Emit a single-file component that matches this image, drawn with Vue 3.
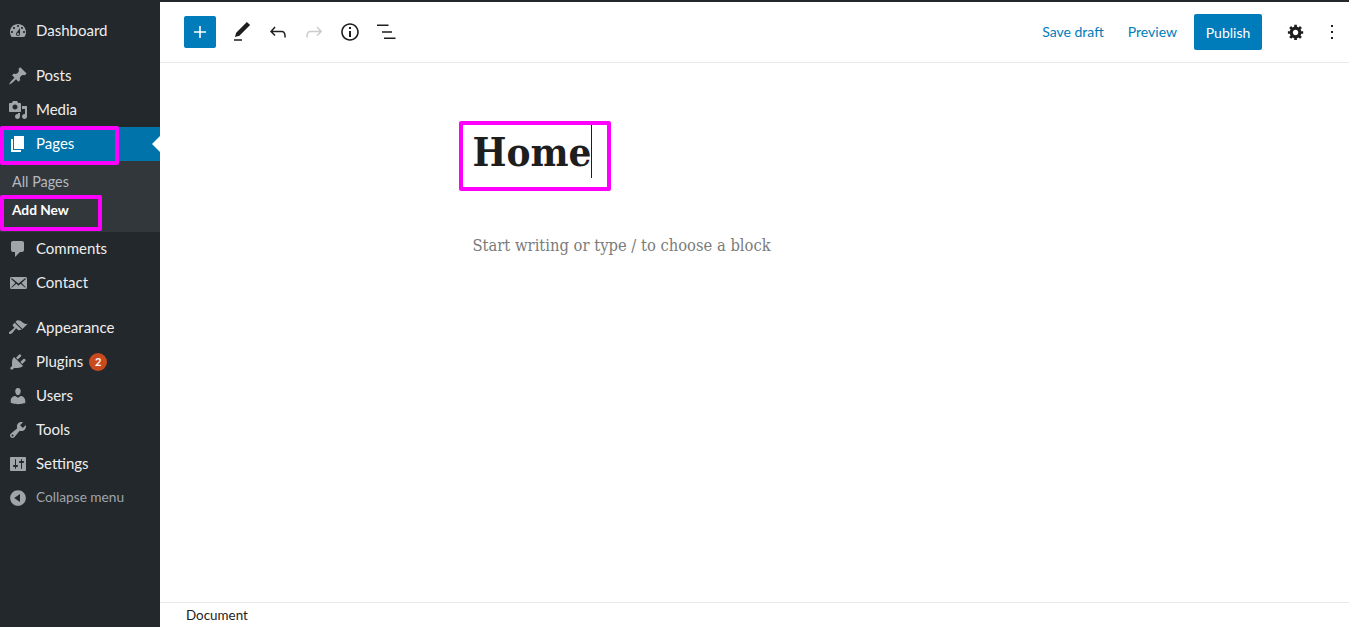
<script setup>
const icons = {
  dashboard: 'M3.76 16h12.48c1.1-1.37 1.76-3.11 1.76-5 0-4.42-3.58-8-8-8s-8 3.58-8 8c0 1.89.66 3.63 1.76 5zM10 4c.55 0 1 .45 1 1s-.45 1-1 1-1-.45-1-1 .45-1 1-1zM6 6c.55 0 1 .45 1 1s-.45 1-1 1-1-.45-1-1 .45-1 1-1zm8 0c.55 0 1 .45 1 1s-.45 1-1 1-1-.45-1-1 .45-1 1-1zm-5.37 5.55L12 7v6c0 1.1-.9 2-2 2s-2-.9-2-2c0-.57.24-1.08.63-1.45zM4 10c.55 0 1 .45 1 1s-.45 1-1 1-1-.45-1-1 .45-1 1-1zm12 0c.55 0 1 .45 1 1s-.45 1-1 1-1-.45-1-1 .45-1 1-1zm-5 3c0-.55-.45-1-1-1s-1 .45-1 1 .45 1 1 1 1-.45 1-1z',
  posts: 'M10.44 3.02l1.82-1.82 6.36 6.35-1.83 1.82c-1.05-.68-2.48-.57-3.41.36l-.75.75c-.92.93-1.04 2.35-.35 3.41l-1.83 1.82-2.41-2.41-2.8 2.79c-.42.42-3.38 2.71-3.8 2.29s1.86-3.39 2.28-3.81l2.79-2.79L4.1 9.36l1.83-1.82c1.05.69 2.48.57 3.4-.36l.75-.75c.93-.92 1.05-2.35.36-3.41z',
  media: 'M13 11V4c0-.55-.45-1-1-1h-1.67L9 1H5L3.67 3H2c-.55 0-1 .45-1 1v7c0 .55.45 1 1 1h10c.55 0 1-.45 1-1zM7 4.5c1.38 0 2.5 1.12 2.5 2.5S8.38 9.5 7 9.5 4.5 8.38 4.5 7 5.62 4.5 7 4.5zM14 6h5v10.5c0 1.38-1.12 2.5-2.5 2.5S14 17.88 14 16.5s1.12-2.5 2.5-2.5c.17 0 .34.02.5.05V9h-3V6zm-4 8.05V13h2v3.5c0 1.38-1.12 2.5-2.5 2.5S7 17.88 7 16.5 8.12 14 9.5 14c.17 0 .34.02.5.05z',
  pages: 'M6 15V2h10v13H6zm-1 1h8v2H3V5h2v11z',
  comments: 'M5 2h9c1.1 0 2 .9 2 2v7c0 1.1-.9 2-2 2h-2l-5 5v-5H5c-1.1 0-2-.9-2-2V4c0-1.1.9-2 2-2z',
  contact: 'M19 14.5v-9c0-.83-.67-1.5-1.5-1.5H3.49c-.83 0-1.5.67-1.5 1.5v9c0 .83.67 1.5 1.5 1.5H17.5c.83 0 1.5-.67 1.5-1.5zm-1.31-9.11c.33.33.15.67-.03.84L13.6 9.95l3.9 4.06c.12.14.2.36.06.51-.13.16-.43.15-.56.05l-4.37-3.73-2.14 1.95-2.13-1.95-4.37 3.73c-.13.1-.43.11-.56-.05-.14-.15-.06-.37.06-.51l3.9-4.06-4.06-3.72c-.18-.17-.36-.51-.03-.84s.67-.17.95.07l6.24 5.04 6.25-5.04c.28-.24.62-.4.95-.07z',
  appearance: 'M14.48 11.06L7.41 3.99l1.5-1.5c.5-.56 2.3-.47 3.51.32 1.21.8 1.43 1.28 2.91 2.1 1.18.64 2.45 1.26 4.45.85zm-.71.71L6.7 4.7 4.93 6.47c-.39.39-.39 1.02 0 1.41l1.06 1.06c.39.39.39 1.03 0 1.42-.6.6-1.43 1.11-2.21 1.69-.35.26-.7.53-1.01.84C1.43 13.23.4 14.89 1.2 15.7c.8.8 2.46-.23 3.8-1.57.31-.31.58-.66.84-1.01.58-.78 1.09-1.61 1.69-2.21.39-.39 1.02-.39 1.41 0l1.06 1.06c.39.39 1.02.39 1.41 0z',
  plugins: 'M13.11 4.36L9.87 7.6 8 5.73l3.24-3.24c.35-.34 1.05-.2 1.56.32.52.51.66 1.21.31 1.55zm-8 1.77l.91-1.12 9.01 9.01-1.19.84c-.71.71-2.63 1.16-3.82 1.16H6.14L4.9 17.26c-.59.59-1.54.59-2.12 0-.59-.58-.59-1.53 0-2.12l1.24-1.24v-3.88c0-1.13.4-3.19 1.09-3.89zm7.26 3.97l3.24-3.24c.34-.35 1.04-.21 1.55.31.52.51.66 1.21.31 1.55l-3.24 3.25z',
  users: 'M10 9.25c-2.27 0-2.73-3.44-2.73-3.44C7 4.02 7.82 2 9.97 2c2.16 0 2.98 2.02 2.71 3.81 0 0-.41 3.44-2.68 3.44zm0 2.57L12.72 10c2.39 0 4.52 2.33 4.52 4.53v2.49s-3.65 1.13-7.24 1.13c-3.65 0-7.24-1.13-7.24-1.13v-2.49c0-2.25 1.94-4.48 4.47-4.48z',
  tools: 'M16.68 9.77c-1.34 1.34-3.3 1.67-4.95.99l-5.41 6.52c-.99.99-2.59.99-3.58 0s-.99-2.59 0-3.57l6.52-5.42c-.68-1.65-.35-3.61.99-4.95 1.28-1.28 3.12-1.62 4.72-1.06l-2.89 2.89 2.82 2.82 2.86-2.87c.53 1.58.18 3.39-1.08 4.65zM3.81 16.21c.4.39 1.04.39 1.43 0 .4-.4.4-1.04 0-1.43-.39-.4-1.03-.4-1.43 0-.39.39-.39 1.03 0 1.43z',
  settings: 'M18 16V4c0-.55-.45-1-1-1H3c-.55 0-1 .45-1 1v12c0 .55.45 1 1 1h14c.55 0 1-.45 1-1zM8 11h1c.55 0 1 .45 1 1s-.45 1-1 1H8v1.5c0 .28-.22.5-.5.5s-.5-.22-.5-.5V13H6c-.55 0-1-.45-1-1s.45-1 1-1h1V5.5c0-.28.22-.5.5-.5s.5.22.5.5V11zm5-2h-1c-.55 0-1-.45-1-1s.45-1 1-1h1V5.5c0-.28.22-.5.5-.5s.5.22.5.5V7h1c.55 0 1 .45 1 1s-.45 1-1 1h-1v5.5c0 .28-.22.5-.5.5s-.5-.22-.5-.5V9z',
  collapse: 'M10 2.16c4.33 0 7.84 3.51 7.84 7.84s-3.51 7.84-7.84 7.84S2.16 14.33 2.16 10 5.71 2.16 10 2.16zm2 11.72V6.12L6.18 9.97z',
}

const firstGroup = [
  { label: 'Posts', icon: icons.posts },
  { label: 'Media', icon: icons.media },
]
const secondGroup = [
  { label: 'Comments', icon: icons.comments },
  { label: 'Contact', icon: icons.contact },
]
const thirdGroup = [
  { label: 'Appearance', icon: icons.appearance },
  { label: 'Plugins', icon: icons.plugins, badge: 2 },
  { label: 'Users', icon: icons.users },
  { label: 'Tools', icon: icons.tools },
  { label: 'Settings', icon: icons.settings },
]

const tools = [
  { name: 'edit', d: 'M20.1 5.1L16.9 2 6.2 12.7l-1.3 4.4 4.5-1.3L20.1 5.1zM4 20.8h8v-1.5H4v1.5z' },
  { name: 'undo', d: 'M18.3 11.7c-.6-.6-1.4-.9-2.3-.9H6.7l2.9-3.3-1.1-1-4.5 5L8.5 16l1-1-2.7-2.7H16c.5 0 .9.2 1.3.5 1 1 1 3.4 1 4.5v.3h1.5v-.2c0-1.5 0-4.3-1.5-5.7z' },
  { name: 'redo', d: 'M15.6 6.5l-1.1 1 2.9 3.3H8c-.9 0-1.7.3-2.3.9-1.4 1.5-1.4 4.2-1.4 5.6v.2h1.5v-.3c0-1.1 0-3.5 1-4.5.3-.3.7-.5 1.3-.5h9.2L14.5 15l1.1 1.1 4.6-4.6-4.6-5z', off: true },
  { name: 'info', d: 'M12 3.2c-4.8 0-8.8 3.9-8.8 8.8 0 4.8 3.9 8.8 8.8 8.8 4.8 0 8.8-3.9 8.8-8.8 0-4.8-4-8.8-8.8-8.8zm0 16c-4 0-7.2-3.3-7.2-7.2C4.8 8 8 4.8 12 4.8s7.2 3.3 7.2 7.2c0 4-3.2 7.2-7.2 7.2zM11 17h2v-6h-2v6zm0-8h2V7h-2v2z' },
  { name: 'list', d: 'M3 4.5h11.5V6H3zM8 11.2h10v1.5H8zM10 17.5h11.5V19H10z' },
]
</script>

<template>
  <div class="page">
    <aside class="sidebar">
      <a class="item">
        <svg class="icon" viewBox="0 0 20 20"><path :d="icons.dashboard" /></svg>
        <span>Dashboard</span>
      </a>
      <div class="sep"></div>
      <a v-for="m in firstGroup" :key="m.label" class="item">
        <svg class="icon" viewBox="0 0 20 20"><path :d="m.icon" /></svg>
        <span>{{ m.label }}</span>
      </a>
      <a class="item active">
        <svg class="icon" viewBox="0 0 20 20"><path :d="icons.pages" /></svg>
        <span>Pages</span>
      </a>
      <div class="submenu">
        <a class="sub">All Pages</a>
        <a class="sub current">Add New</a>
      </div>
      <a v-for="m in secondGroup" :key="m.label" class="item">
        <svg class="icon" viewBox="0 0 20 20"><path :d="m.icon" /></svg>
        <span>{{ m.label }}</span>
      </a>
      <div class="sep"></div>
      <a v-for="m in thirdGroup" :key="m.label" class="item">
        <svg class="icon" viewBox="0 0 20 20"><path :d="m.icon" /></svg>
        <span>{{ m.label }}</span>
        <b v-if="m.badge" class="badge">{{ m.badge }}</b>
      </a>
      <a class="item collapse">
        <svg class="icon" viewBox="0 0 20 20"><path :d="icons.collapse" /></svg>
        <span>Collapse menu</span>
      </a>
    </aside>

    <main class="editor">
      <header class="toolbar">
        <button class="inserter">
          <svg viewBox="0 0 24 24" width="24" height="24"><path d="M18 11.2h-5.2V6h-1.6v5.2H6v1.6h5.2V18h1.6v-5.2H18z" /></svg>
        </button>
        <span v-for="t in tools" :key="t.name" class="tool" :class="{ off: t.off }">
          <svg viewBox="0 0 24 24" width="24" height="24"><path :d="t.d" /></svg>
        </span>
        <div class="right">
          <a class="link">Save draft</a>
          <a class="link preview">Preview</a>
          <button class="publish">Publish</button>
          <span class="tool cog">
            <svg viewBox="0 0 20 20" width="18" height="18"><path d="M18 12h-2.18c-.17.7-.44 1.35-.81 1.93l1.54 1.54-2.1 2.1-1.54-1.54c-.58.36-1.23.63-1.91.79V19H8v-2.18c-.68-.16-1.33-.43-1.91-.79l-1.54 1.54-2.12-2.12 1.54-1.54c-.36-.58-.63-1.23-.79-1.91H1V9.03h2.17c.16-.7.44-1.35.8-1.94L2.43 5.55l2.1-2.1 1.54 1.54c.58-.37 1.24-.64 1.93-.81V2h3v2.18c.68.16 1.33.43 1.91.79l1.54-1.54 2.12 2.12-1.54 1.54c.36.59.64 1.24.8 1.94H18V12zm-8.5 1.5c1.66 0 3-1.34 3-3s-1.34-3-3-3-3 1.34-3 3 1.34 3 3 3z" /></svg>
          </span>
          <span class="tool more">
            <svg viewBox="0 0 24 24" width="24" height="24"><path d="M11 5h2v2h-2zM11 11h2v2h-2zM11 17h2v2h-2z" /></svg>
          </span>
        </div>
      </header>

      <section class="content">
        <div class="column">
          <h1 class="title">Home<i class="caret"></i></h1>
          <p class="placeholder">Start writing or type / to choose a block</p>
        </div>
      </section>

      <footer class="status">Document</footer>
    </main>

    <div class="mark mark-pages"></div>
    <div class="mark mark-add"></div>
    <div class="mark mark-home"></div>
  </div>
</template>

<style>
html,
body {
  margin: 0;
  height: 100%;
  overflow: hidden;
  background: #fff;
}
</style>

<style scoped>
.page {
  position: relative;
  display: flex;
  height: 627px;
  font-family: Lato, 'Open Sans', sans-serif;
  color: #1e1e1e;
}

.sidebar {
  width: 160px;
  flex: none;
  box-sizing: border-box;
  padding-top: 14px;
  background: #23282d;
}

.sep {
  height: 11px;
}

.item {
  position: relative;
  display: flex;
  align-items: center;
  height: 34px;
  font-size: 15px;
  color: #eee;
}

.item span {
  margin-top: -2px;
}

.icon {
  width: 20px;
  height: 20px;
  flex: none;
  margin: 0 8px;
  fill: #a0a5aa;
}

.active {
  background: #0073aa;
  color: #fff;
}

.active .icon {
  fill: #fff;
}

.active::after {
  content: '';
  position: absolute;
  right: 0;
  top: 9px;
  border: 8px solid transparent;
  border-right-color: #fff;
  border-left-width: 0;
}

.submenu {
  height: 71px;
  box-sizing: border-box;
  padding-top: 7px;
  background: #32373c;
}

.sub {
  display: block;
  height: 28px;
  padding-left: 12px;
  font-size: 14.4px;
  line-height: 28px;
  color: #b4b9be;
}

.current {
  font-size: 13.7px;
  font-weight: 700;
  color: #fff;
}

.badge {
  width: 18px;
  height: 18px;
  margin-left: 6px;
  border-radius: 50%;
  background: #ca4a1f;
  color: #fff;
  font-size: 11px;
  line-height: 18px;
  text-align: center;
}

.collapse {
  height: 33px;
  font-size: 13.7px;
  color: #a0a5aa;
}

.editor {
  flex: 1;
  min-width: 0;
  display: flex;
  flex-direction: column;
  border-top: 2px solid #23282d;
}

.toolbar {
  display: flex;
  align-items: center;
  height: 60px;
  flex: none;
  padding-left: 24px;
  border-bottom: 1px solid #e9e9e9;
}

.inserter {
  display: flex;
  align-items: center;
  justify-content: center;
  width: 32px;
  height: 32px;
  margin-right: 8px;
  padding: 0;
  border: 0;
  border-radius: 2px;
  background: #007cba;
  fill: #fff;
}

.tool {
  display: flex;
  align-items: center;
  justify-content: center;
  width: 36px;
  height: 36px;
  fill: #1e1e1e;
}

.tool.off {
  fill: #ccc;
}

.right {
  display: flex;
  align-items: center;
  margin-left: auto;
  margin-right: -1px;
}

.link {
  margin-right: 24px;
  padding-bottom: 2px;
  font-size: 14px;
  color: #007cba;
}

.link.preview {
  margin-right: 17px;
}

.publish {
  width: 68px;
  height: 36px;
  margin-right: 16px;
  padding: 0;
  border: 0;
  border-radius: 2px;
  background: #007cba;
  color: #fff;
  font-family: inherit;
  font-size: 14px;
}

.content {
  flex: 1;
  min-height: 0;
}

.column {
  width: 564px;
  margin: 0 auto;
  padding-top: 60px;
}

.title {
  margin: 0;
  height: 58px;
  font-family: 'DejaVu Serif Condensed', 'DejaVu Serif', serif;
  font-size: 40px;
  font-weight: 700;
  line-height: 58px;
}

.caret {
  display: inline-block;
  width: 1px;
  height: 53px;
  margin-top: -10px;
  vertical-align: middle;
  background: #1e1e1e;
}

.placeholder {
  margin: 53px 0 0;
  font-family: 'DejaVu Serif Condensed', 'DejaVu Serif', serif;
  font-size: 16.4px;
  line-height: 24px;
  color: #7b7b7b;
}

.status {
  flex: none;
  height: 24px;
  padding-left: 26px;
  border-top: 1px solid #e9e9e9;
  font-size: 13.4px;
  line-height: 24px;
}

.mark {
  position: absolute;
  box-sizing: border-box;
  border: 4px solid #f0f;
  border-radius: 2px;
}

.mark-pages {
  left: 0;
  top: 126px;
  width: 119px;
  height: 39px;
}

.mark-add {
  left: 0;
  top: 195px;
  width: 102px;
  height: 36px;
}

.mark-home {
  left: 459px;
  top: 121px;
  width: 152px;
  height: 70px;
}
</style>
